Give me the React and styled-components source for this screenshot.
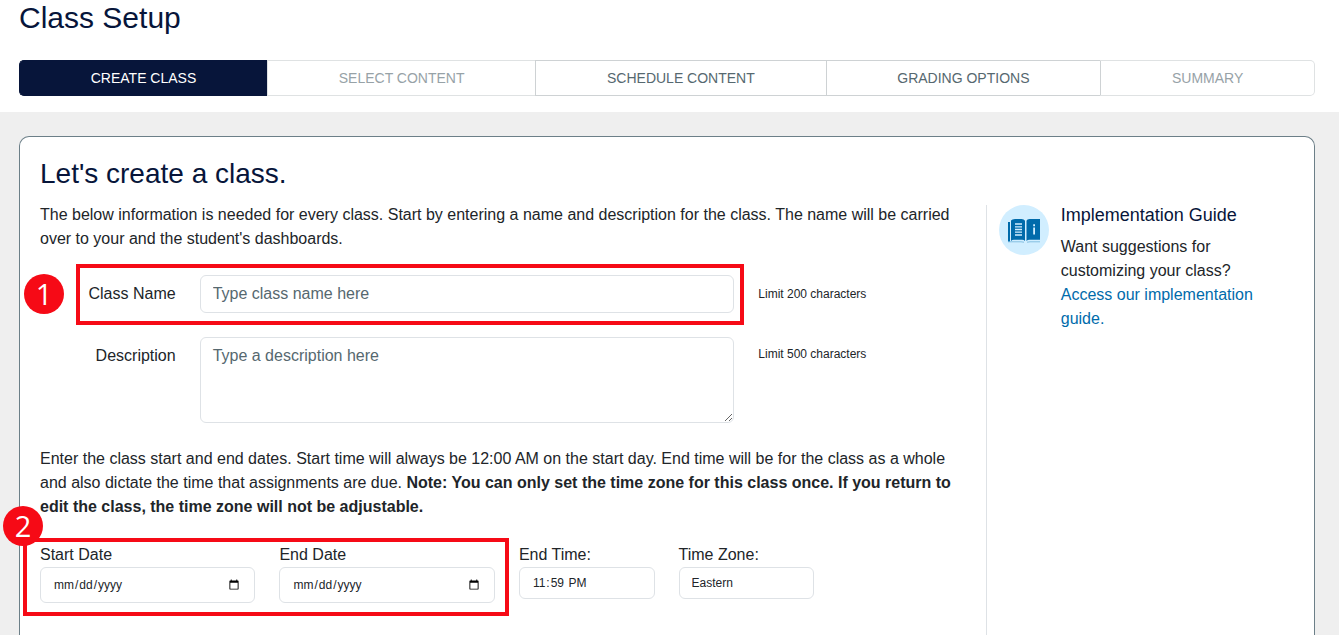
import React from 'react'
import styled, { createGlobalStyle, css } from 'styled-components'

const navy = '#07153a'
const slate = '#56686f'
const blue = '#006bab'
const red = '#f60a16'
const border = '#dee2e6'

const GlobalStyle = createGlobalStyle`
  *,
  *::before,
  *::after {
    box-sizing: border-box;
  }

  body {
    margin: 0;
    background: #fff;
    color: #212529;
    font-family: 'Liberation Sans', Arial, sans-serif;
    font-size: 16px;
    line-height: 24px;
  }

  h1,
  h2,
  h3,
  p {
    margin: 0;
  }

  input,
  select,
  textarea,
  button {
    font-family: inherit;
  }
`

const Page = styled.div`
  display: flex;
  flex-direction: column;
  min-height: 100vh;
`

const Header = styled.header`
  padding: 0 24px 16px 19px;
`

const Title = styled.h1`
  color: ${navy};
  font-size: 30px;
  font-weight: 400;
  line-height: 36px;
`

const Steps = styled.nav`
  display: flex;
  margin-top: 24px;
`

const Step = styled.button`
  flex: 1 1 auto;
  height: 36px;
  padding: 0;
  border: 1px solid #ced2d4;
  border-right-width: 0;
  background: #fff;
  color: ${slate};
  font-size: 14px;
  line-height: 20px;
  text-transform: uppercase;

  &:first-child {
    border-radius: 5px 0 0 5px;
  }

  &:last-child {
    border-right-width: 1px;
    border-radius: 0 5px 5px 0;
  }

  &:disabled {
    border-color: #dfe2e3;
    color: #97a2a7;
  }

  &:disabled:last-child {
    border-left-color: #ced2d4;
  }

  ${p =>
    p.$active &&
    css`
      border-color: ${navy};
      background: ${navy};
      color: #fff;
    `}
`

const Main = styled.main`
  display: flex;
  flex: 1;
  padding: 24px 24px 0 19px;
  background: #efefef;
`

const Card = styled.section`
  flex: 1;
  display: flex;
  flex-direction: column;
  padding: 20px 21px 0 20px;
  border: 1px solid #6c7f88;
  border-bottom: 0;
  border-radius: 10px 10px 0 0;
  background: #fff;
`

const Heading = styled.h2`
  margin-bottom: 13px;
  color: ${navy};
  font-size: 28px;
  font-weight: 400;
  line-height: 33px;
`

const Columns = styled.div`
  flex: 1;
  display: grid;
  grid-template-columns: 3fr 1fr;
  margin: 0 -12px;
`

const Form = styled.form`
  padding: 0 12px 32px;
`

const Grid = styled.div`
  display: grid;
  grid-template-columns: repeat(12, 1fr);
  column-gap: 24px;
  align-items: start;
`

const FieldRow = styled(Grid)`
  margin: 24px 0;
`

const Group = styled(Grid)`
  position: relative;
  grid-column: span ${p => p.$span};
  grid-template-columns: subgrid;
`

const Label = styled.label`
  grid-column: span 2;
  padding-top: 7px;
  text-align: right;
`

const control = css`
  display: block;
  width: 100%;
  border: 1px solid ${border};
  border-radius: 6px;
  background: #fff;
  color: #212529;

  &::placeholder {
    color: ${slate};
    opacity: 1;
  }
`

const TextInput = styled.input`
  ${control}
  grid-column: span 7;
  height: 38px;
  padding: 6px 12px;
  font-size: 16px;
`

const TextArea = styled.textarea`
  ${control}
  grid-column: span 7;
  height: 86px;
  padding: 6px 12px;
  font-size: 16px;
  line-height: 24px;
  resize: vertical;
`

const Hint = styled.span`
  grid-column: span 3;
  padding-top: 8px;
  font-size: 12px;
  line-height: 18px;
`

const CenteredHint = styled(Hint)`
  align-self: center;
  padding-top: 0;
`

const DateField = styled.div`
  grid-column: span ${p => p.$span};
`

const FieldLabel = styled.label`
  display: block;
`

const DateInput = styled.input`
  ${control}
  height: 36px;
  padding: 4px 12px;
  font-size: 12px;
`

const TimeInput = styled.input`
  ${control}
  height: 32px;
  padding: 4px 12px;
  font-size: 12px;

  &::-webkit-calendar-picker-indicator {
    display: none;
  }
`

const Select = styled.select`
  ${control}
  appearance: none;
  height: 32px;
  padding: 4px 12px;
  font-size: 12px;
`

const NameCallout = styled.div`
  position: absolute;
  inset: -11px -10px -12px 36px;
  border: 4px solid ${red};
  pointer-events: none;
`

const DatesCallout = styled.div`
  position: absolute;
  inset: -5px -14px -13px -17px;
  border: 4px solid ${red};
  pointer-events: none;
`

const Badge = styled.span`
  position: absolute;
  top: ${p => p.$top};
  left: ${p => p.$left};
  display: flex;
  align-items: center;
  justify-content: center;
  width: 40px;
  height: 40px;
  border-radius: 50%;
  background: ${red};
  color: #fff;
  font-family: 'Open Sans', 'Noto Sans', sans-serif;
  font-size: 29px;
  line-height: 40px;
`

const Aside = styled.aside`
  display: flex;
  align-items: flex-start;
  gap: 12px;
  margin-top: 2px;
  padding: 0 12px;
  border-left: 1px solid ${border};
`

const GuideIcon = styled.svg`
  flex: none;
  width: 50px;
  height: 50px;
`

const GuideTitle = styled.h3`
  margin-bottom: 10px;
  color: ${navy};
  font-size: 18px;
  font-weight: 400;
  line-height: 20px;
`

const GuideText = styled.p`
  max-width: 208px;
`

const GuideLink = styled.a`
  color: ${blue};
  text-decoration: none;

  &:hover {
    text-decoration: underline;
  }
`

const steps = [
  { text: 'Create Class', active: true },
  { text: 'Select Content', disabled: true },
  { text: 'Schedule Content' },
  { text: 'Grading Options' },
  { text: 'Summary', disabled: true },
]

const Guide = () => (
  <Aside>
    <GuideIcon viewBox="0 0 50 50" aria-hidden="true">
      <circle cx="25" cy="25" r="25" fill="#d1eeff" />
      <path d="M9 17h2v19.500H9z" fill={blue} />
      <path
        d="M12 15.500q1-1.500 4-1.500h6.500q2.500 0 3.500 1.800V36q-1-1.200-3-1.200H15q-2 0-3 1.200z"
        fill={blue}
      />
      <path
        d="M27.500 15.800q.5-1.800 3-1.800H41v20.800H30.500q-2 0-3 1.200z"
        fill={blue}
      />
      <path
        d="M9 36.800h13l3 .4M28 37.200l3-.4h10"
        fill="none"
        stroke="#4f9dcb"
        strokeWidth=".6"
      />
      <path
        d="M16 19h7M16 21.800h7M16 24.500h7M16 27.200h7M16 30h7"
        stroke="#d1eeff"
        strokeWidth="1.300"
      />
      <path
        d="M34.200 19.200h1.800v2h-1.800zM34.200 22.500h1.800v7h-1.800z"
        fill="#d1eeff"
      />
    </GuideIcon>
    <div>
      <GuideTitle>Implementation Guide</GuideTitle>
      <GuideText>
        Want suggestions for customizing your class?{' '}
        <GuideLink href="#guide">Access our implementation guide.</GuideLink>
      </GuideText>
    </div>
  </Aside>
)

const DatesRow = () => (
  <FieldRow>
    <Group $span={6}>
      <DateField $span={3}>
        <FieldLabel htmlFor="start-date">Start Date</FieldLabel>
        <DateInput id="start-date" type="date" />
      </DateField>
      <DateField $span={3}>
        <FieldLabel htmlFor="end-date">End Date</FieldLabel>
        <DateInput id="end-date" type="date" />
      </DateField>
      <DatesCallout />
      <Badge $top="-37px" $left="-37px">
        2
      </Badge>
    </Group>
    <DateField $span={2}>
      <FieldLabel htmlFor="end-time">End Time:</FieldLabel>
      <TimeInput id="end-time" type="time" defaultValue="23:59" />
    </DateField>
    <DateField $span={2}>
      <FieldLabel htmlFor="time-zone">Time Zone:</FieldLabel>
      <Select id="time-zone" defaultValue="Eastern">
        <option>Eastern</option>
      </Select>
    </DateField>
  </FieldRow>
)

export default () => (
  <Page>
    <GlobalStyle />
    <Header>
      <Title>Class Setup</Title>
      <Steps>
        {steps.map(s => (
          <Step
            key={s.text}
            type="button"
            disabled={s.disabled}
            $active={s.active}
          >
            {s.text}
          </Step>
        ))}
      </Steps>
    </Header>
    <Main>
      <Card>
        <Heading>Let's create a class.</Heading>
        <Columns>
          <Form>
            <p>
              The below information is needed for every class. Start by entering
              a name and description for the class. The name will be carried
              over to your and the student's dashboards.
            </p>
            <FieldRow>
              <Group $span={9}>
                <Label htmlFor="class-name">Class Name</Label>
                <TextInput id="class-name" placeholder="Type class name here" />
                <NameCallout />
                <Badge $top="-1px" $left="-16px">
                  1
                </Badge>
              </Group>
              <CenteredHint>Limit 200 characters</CenteredHint>
            </FieldRow>
            <FieldRow>
              <Label htmlFor="description">Description</Label>
              <TextArea
                id="description"
                placeholder="Type a description here"
              />
              <Hint>Limit 500 characters</Hint>
            </FieldRow>
            <p>
              Enter the class start and end dates. Start time will always be
              12:00 AM on the start day. End time will be for the class as a
              whole and also dictate the time that assignments are due.{' '}
              <strong>
                Note: You can only set the time zone for this class once. If you
                return to edit the class, the time zone will not be adjustable.
              </strong>
            </p>
            <DatesRow />
          </Form>
          <Guide />
        </Columns>
      </Card>
    </Main>
  </Page>
)
